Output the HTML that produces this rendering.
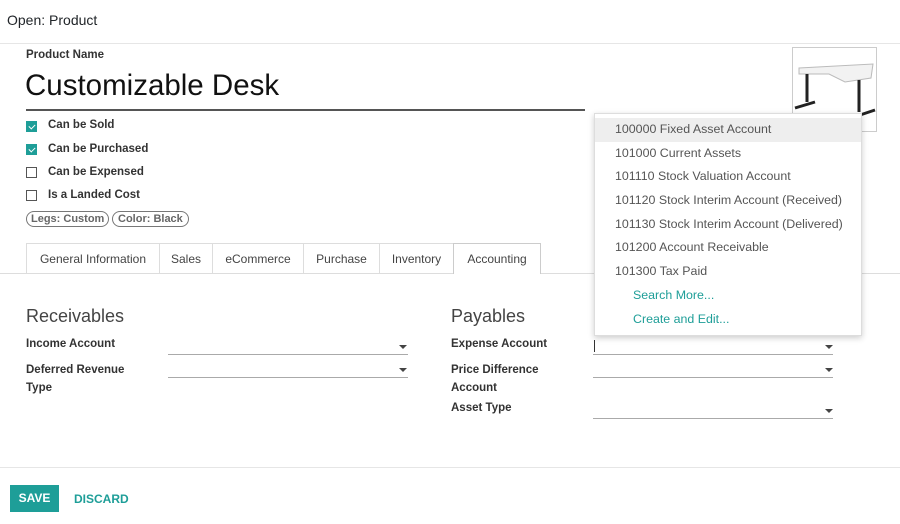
<!DOCTYPE html>
<html><head><style>
body{margin:0;width:900px;height:524px;background:#fff;font-family:"Liberation Sans",sans-serif;color:#212529;position:relative;overflow:hidden}
.a{position:absolute;white-space:nowrap}
.b{font-weight:bold;font-size:11.5px;color:#333}
.cb{position:absolute;left:26px;width:11px;height:11px;border:1px solid #555;box-sizing:border-box}
.cb.on{background:#1e9e98;border-color:#1e9e98}
.cb.on:after{content:"";position:absolute;left:3px;top:1px;width:3px;height:5px;border:solid #fff;border-width:0 1px 1px 0;transform:rotate(45deg)}
.tab{position:absolute;top:243px;height:30px;line-height:30px;font-size:12px;color:#444;text-align:center;border:1px solid #ddd;border-bottom:none;box-sizing:border-box}
.ln{position:absolute;height:1px;background:#aaa}
.ar{position:absolute;width:0;height:0;border-left:4px solid transparent;border-right:4px solid transparent;border-top:4px solid #444}
.dd div{height:23.7px;line-height:23.7px;padding-left:20px;font-size:12.4px;color:#555}
</style></head><body>
<div class="a" style="left:7px;top:12px;font-size:14px">Open: Product</div>
<div style="position:absolute;left:0;top:43px;width:900px;height:1px;background:#e6e6e6"></div>
<div class="a b" style="left:26px;top:49px">Product Name</div>
<div class="a" style="left:25px;top:69px;font-size:29.5px;color:#111">Customizable Desk</div>
<div style="position:absolute;left:26px;top:109px;width:559px;height:2px;background:#555"></div>
<div class="cb on" style="top:121px"></div><div class="a b" style="left:48px;top:119px">Can be Sold</div>
<div class="cb on" style="top:144px"></div><div class="a b" style="left:48px;top:143px">Can be Purchased</div>
<div class="cb" style="top:167px"></div><div class="a b" style="left:48px;top:166px">Can be Expensed</div>
<div class="cb" style="top:190px"></div><div class="a b" style="left:48px;top:189px">Is a Landed Cost</div>
<div class="a" style="left:26px;top:211px;font-size:11px;font-weight:bold;color:#666;border:1.5px solid #777;border-radius:8px;padding:0 4px;line-height:14px">Legs: Custom</div>
<div class="a" style="left:112px;top:211px;font-size:11px;font-weight:bold;color:#666;border:1.5px solid #777;border-radius:8px;padding:0 5px;line-height:14px">Color: Black</div>
<div style="position:absolute;left:792px;top:47px;width:85px;height:85px;border:1px solid #ccc;box-sizing:border-box">
<svg width="84" height="84"><polygon points="6,20 80,16 78,30 52,34 36,26 6,26" fill="#f2f2f2" stroke="#bbb"/><line x1="14" y1="26" x2="14" y2="54" stroke="#222" stroke-width="3"/><line x1="2" y1="60" x2="22" y2="54" stroke="#222" stroke-width="3"/><line x1="66" y1="32" x2="66" y2="64" stroke="#222" stroke-width="3"/><line x1="52" y1="72" x2="82" y2="62" stroke="#222" stroke-width="3"/></svg></div>
<div style="position:absolute;left:0;top:273px;width:900px;height:1px;background:#ddd"></div>
<div class="tab" style="left:26px;width:134px">General Information</div>
<div class="tab" style="left:159px;width:54px">Sales</div>
<div class="tab" style="left:212px;width:92px">eCommerce</div>
<div class="tab" style="left:303px;width:77px">Purchase</div>
<div class="tab" style="left:379px;width:75px">Inventory</div>
<div class="tab" style="left:453px;width:88px;background:#fff;height:31px;border-color:#ccc">Accounting</div>
<div class="a" style="left:26px;top:306px;font-size:18px;color:#444">Receivables</div>
<div class="a" style="left:451px;top:306px;font-size:18px;color:#444">Payables</div>
<div class="a b" style="left:26px;top:338px">Income Account</div>
<div class="a b" style="left:26px;top:361px;line-height:18px">Deferred Revenue<br>Type</div>
<div class="a b" style="left:451px;top:338px">Expense Account</div>
<div class="a b" style="left:451px;top:361px;line-height:18px">Price Difference<br>Account</div>
<div class="a b" style="left:451px;top:402px">Asset Type</div>
<div class="ln" style="left:168px;top:354px;width:240px"></div><div class="ar" style="left:399px;top:345px"></div>
<div class="ln" style="left:168px;top:377px;width:240px"></div><div class="ar" style="left:399px;top:368px"></div>
<div class="ln" style="left:593px;top:354px;width:240px"></div><div class="ar" style="left:825px;top:345px"></div>
<div class="ln" style="left:593px;top:377px;width:240px"></div><div class="ar" style="left:825px;top:368px"></div>
<div class="ln" style="left:593px;top:418px;width:240px"></div><div class="ar" style="left:825px;top:409px"></div>
<div style="position:absolute;left:594px;top:340px;width:1px;height:12px;background:#333"></div>
<div class="dd" style="position:absolute;left:594px;top:113px;width:268px;height:223px;background:#fff;border:1px solid #ddd;box-shadow:0 2px 6px rgba(0,0,0,.2);padding-top:4px;box-sizing:border-box">
<div style="background:#eee">100000 Fixed Asset Account</div>
<div>101000 Current Assets</div>
<div>101110 Stock Valuation Account</div>
<div>101120 Stock Interim Account (Received)</div>
<div>101130 Stock Interim Account (Delivered)</div>
<div>101200 Account Receivable</div>
<div>101300 Tax Paid</div>
<div style="padding-left:38px;color:#1e9e98">Search More...</div>
<div style="padding-left:38px;color:#1e9e98">Create and Edit...</div>
</div>
<div style="position:absolute;left:0;top:467px;width:900px;height:1px;background:#e6e6e6"></div>
<div class="a" style="left:10px;top:485px;width:49px;height:27px;line-height:27px;background:#1e9e98;color:#fff;font-size:12px;font-weight:bold;text-align:center">SAVE</div>
<div class="a" style="left:74px;top:492px;font-size:12px;font-weight:bold;color:#1e9e98">DISCARD</div>
</body></html>
